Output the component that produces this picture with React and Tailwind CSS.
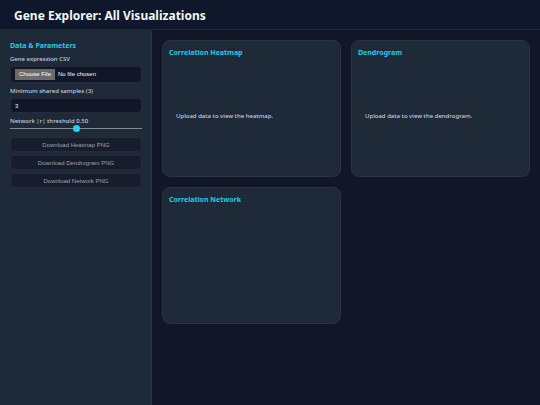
import { useState } from "react";

function Card({ title, children }) {
  return (
    <section className="flex h-[137px] flex-col rounded-lg border border-[#2a3441] bg-[#1e2a37] px-1.5 pt-1.5">
      <h2 className="text-[7px] leading-3 font-bold text-[#26cbe5]">{title}</h2>
      {children && (
        <p className="mt-[51px] px-[7px] text-[6px] leading-3 font-medium text-[#c3cce0]">{children}</p>
      )}
    </section>
  );
}

function DownloadButton({ children }) {
  return (
    <button
      disabled
      className="h-[15px] w-full rounded border border-[#242c3b] bg-[#171d2d] font-['Liberation_Sans',sans-serif] text-[6px] leading-3 text-[#9ca1ab]"
    >
      {children}
    </button>
  );
}

export default function App() {
  const [minShared, setMinShared] = useState(3);
  const [threshold, setThreshold] = useState(0.5);

  return (
    <div className="flex min-h-screen flex-col bg-[#111726] font-['Noto_Sans',sans-serif] text-[#f1f5f9]">
      <header className="border-b border-[#1f2937] bg-[#0f172a] px-3.5 pt-[7px] pb-1">
        <h1 className="text-[12px] leading-[18px] font-bold">Gene Explorer: All Visualizations</h1>
      </header>

      <div className="flex grow">
        <aside className="w-[152px] shrink-0 border-r border-[#2a3441] bg-[#1e2a37] pt-2.5 pr-[9px] pl-2.5">
          <h2 className="text-[7px] leading-3 font-bold text-[#26cbe5]">Data &amp; Parameters</h2>

          <label htmlFor="csv" className="mt-px mb-px block text-[6px] leading-3 font-medium text-[#c3cce0]">
            Gene expression CSV
          </label>
          <input
            id="csv"
            type="file"
            accept=".csv"
            className="block h-[17px] w-full rounded border border-[#242c3b] bg-[#111726] px-1 py-0.5 font-['Liberation_Sans',sans-serif] text-[6px] leading-[11px] file:me-[3px] file:h-[11px] file:bg-[#6b6b6b] file:px-1 file:text-white"
          />

          <label htmlFor="min-shared" className="mt-0.5 mb-px block text-[6px] leading-3 font-medium text-[#c3cce0]">
            Minimum shared samples ({minShared})
          </label>
          <input
            id="min-shared"
            type="text"
            inputMode="numeric"
            value={minShared}
            onChange={(e) => setMinShared(e.target.value)}
            className="block h-[15px] w-full rounded border border-[#242c3b] bg-[#111726] px-1 font-['Liberation_Sans',sans-serif] text-[6px] leading-3"
          />

          <label htmlFor="threshold" className="mt-0.5 block text-[6px] leading-3 font-medium text-[#c3cce0]">
            Network |r| threshold {threshold.toFixed(2)}
          </label>
          {/* thin track with a round cyan thumb */}
          <input
            id="threshold"
            type="range"
            min="0"
            max="1"
            step="0.01"
            value={threshold}
            onChange={(e) => setThreshold(Number(e.target.value))}
            className="
              block h-[3px] w-full appearance-none bg-transparent
              [&::-webkit-slider-runnable-track]:h-px
              [&::-webkit-slider-runnable-track]:bg-[#858a90]
              [&::-webkit-slider-thumb]:-mt-[3px]
              [&::-webkit-slider-thumb]:size-[7px]
              [&::-webkit-slider-thumb]:appearance-none
              [&::-webkit-slider-thumb]:rounded-full
              [&::-webkit-slider-thumb]:bg-[#22d3ee]
            "
          />

          <div className="mt-[7px] flex flex-col gap-[3px]">
            <DownloadButton>Download Heatmap PNG</DownloadButton>
            <DownloadButton>Download Dendrogram PNG</DownloadButton>
            <DownloadButton>Download Network PNG</DownloadButton>
          </div>
        </aside>

        <main className="grid grow grid-cols-2 content-start gap-2.5 p-2.5">
          <Card title="Correlation Heatmap">Upload data to view the heatmap.</Card>
          <Card title="Dendrogram">Upload data to view the dendrogram.</Card>
          <Card title="Correlation Network" />
        </main>
      </div>
    </div>
  );
}
